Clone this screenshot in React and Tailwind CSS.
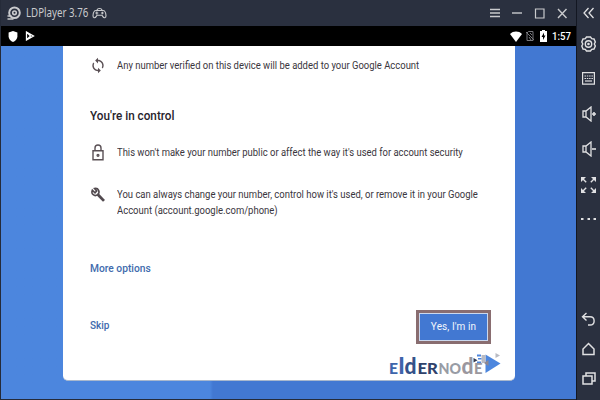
import React from "react";

function Icon({ className = "", w = 16, h = 16, children, sw = 1.3, box }) {
  return (
    <svg className={`block shrink-0 ${className}`} width={w} height={h} viewBox={box || `0 0 ${w} ${h}`} fill="none" stroke="currentColor" strokeWidth={sw}>
      {children}
    </svg>
  );
}

function TitleBar() {
  return (
    <div className="flex h-[26px] items-center bg-[#2a303f] pl-[6px] text-[#c9cacd]">
      <Icon w={14} h={15} sw={2}>
        <circle cx="7.5" cy="6.8" r="5.3" />
        <circle cx="7.5" cy="6.8" r="1.8" strokeWidth="1.6" />
        <path d="M.5 13h6M.5 10h4" strokeWidth="1.5" />
      </Icon>
      <div className="ml-[5px] h-[18px] w-[66px] whitespace-nowrap font-['Noto_Sans'] text-[12px] leading-[18px]">
        <span className="inline-block origin-left scale-x-[0.81]">LDPlayer 3.76</span>
      </div>
      <Icon w={15} h={13} sw={1.1}>
        <path d="M4 3.500h7c2 0 2.800 2.600 3 5 .2 2.500-2 3-3.300.9L10 8.300H5l-.7 1.100C3 11.500.8 11 1 8.500c.2-2.400 1-5 3-5zM5 3.500c0-2 1.200-2 2.500-2s2.500 0 2.500 2M3.300 6h3M4.800 4.500v3M9 6h2.700M10.400 4.700v2.600" />
      </Icon>
      <div className="ml-auto mr-[8px] flex items-center gap-[12px]">
        <Icon w={10} h={10} sw={1.4}><path d="M0 1.500h10M0 5h10M0 8.500h10" /></Icon>
        <Icon w={10} h={10} sw={1.4}><path d="M0 5h10" /></Icon>
        <Icon w={11} h={11} sw={1.2}><path d="M1.500 1h8.500v9H1.500z" /></Icon>
        <Icon w={11} h={11} sw={1.4}><path d="M1 1l8.500 9M9.500 1L1 10" /></Icon>
      </div>
    </div>
  );
}

function StatusBar() {
  return (
    <div className="flex h-5 items-center bg-black pl-[7px] pr-[5px] text-white">
      <Icon w={10} h={11} sw={0}><path fill="currentColor" d="M5 0l4.400 1.500v4C9.400 8 7 10.200 5 11 3 10.200.6 8 .6 5.500v-4z" /></Icon>
      <Icon w={10} h={10} sw={1.3} className="ml-[7px]"><path d="M1.500 1l7 4-7 4zM1.500 1l4 4-4 4" /></Icon>
      <Icon w={12} h={11} sw={0} className="ml-auto"><path fill="currentColor" d="M0 3C3-.3 9-.3 12 3L6 11z" /></Icon>
      <Icon w={8} h={10} sw={1} className="ml-[4px] text-[#77777c]"><path d="M2.500.5H7v9H1V2zM0 1l8 8M3 6l2 3M4 2l2 2" /></Icon>
      <Icon w={7} h={12} sw={0} className="ml-[6px]">
        <path fill="currentColor" d="M2 0h3v1h2v11H0V1h2z" />
        <path fill="#000" d="M4 2.500L1.500 7H3v3l2.500-4.500H4z" />
      </Icon>
      <div className="ml-[5px] h-4 w-[19px] whitespace-nowrap font-[Roboto] text-[11px] font-medium leading-[18px]">
        <span className="inline-block origin-left scale-x-[0.87]">1:57</span>
      </div>
    </div>
  );
}

function Logo() {
  return (
    <svg className="block" width="113" height="24" viewBox="0 0 113 24">
      <g fontFamily="Lato, sans-serif" fontWeight="900">
        <text x="0" y="20.500" fill="#3e65ab" fontSize="15" textLength="9" lengthAdjust="spacingAndGlyphs">E</text>
        <text x="9.500" y="20.500" fill="#3e65ab" fontSize="22" textLength="6" lengthAdjust="spacingAndGlyphs">l</text>
        <text x="15.500" y="20.500" fill="#35528a" fontSize="22" textLength="12" lengthAdjust="spacingAndGlyphs">d</text>
        <text x="28.500" y="20.500" fill="#2f426b" fontSize="15" textLength="20.500" lengthAdjust="spacingAndGlyphs">ER</text>
        <text x="49.500" y="20.500" fill="#989ca5" fontSize="15" textLength="22.500" lengthAdjust="spacingAndGlyphs">NO</text>
        <text x="72.500" y="20.500" fill="#9b979e" fontSize="22" textLength="12" lengthAdjust="spacingAndGlyphs">d</text>
        <text x="85" y="20.500" fill="#9b979e" fontSize="15" textLength="8.500" lengthAdjust="spacingAndGlyphs">E</text>
      </g>
      <path fill="#4c86de" d="M96.500 1.500L111.500 10.500 96.500 20z" />
      <path fill="#b9bbc3" d="M92.500 2h4v8h-4zM106.500 0l4.500 2.500-4.500 2.500z" />
      <path fill="#8e8790" d="M95 10l4.500-3v6z" />
      <path fill="#4c86de" d="M88 1.500h4v2h-4zM89 5h3.500v1.500H89zM88 8.500h4v1.500h-4z" />
      <path fill="#303950" d="M84.500 5l4 2.300-4 2.300z" />
    </svg>
  );
}

function Card() {
  return (
    <div className="flex h-[335px] w-[452px] flex-col rounded-b-[5px] border-b border-[#a9b8cd] bg-white pl-[27px] pt-[11px] font-[Roboto] text-[10px] leading-[16px] text-[#3a363d]">
      <div className="flex h-[17px] items-start">
        <Icon w={16} h={17} sw={0} box="2 0 20 24" className="text-[#5a5055]">
          <path fill="currentColor" d="M12 4V1L8 5l4 4V6c3.310 0 6 2.690 6 6 0 1.010-.25 1.970-.7 2.800l1.460 1.460C19.540 15.030 20 13.570 20 12c0-4.420-3.580-8-8-8zm0 14c-3.310 0-6-2.690-6-6 0-1.010.25-1.970.7-2.800L5.240 7.740C4.460 8.970 4 10.430 4 12c0 4.420 3.580 8 8 8v3l4-4-4-4v3z" />
        </Icon>
        <p className="ml-[11px] mt-px origin-left scale-x-[0.946] whitespace-nowrap">Any number verified on this device will be added to your Google Account</p>
      </div>
      <h1 className="mt-[33px] h-[18px] w-fit origin-left scale-x-[0.977] whitespace-nowrap text-[12px] font-medium leading-[18px] text-[#27232c]">You're in control</h1>
      <div className="mt-[19px] flex h-[17px] items-start">
        <Icon w={15} h={17} sw={1.400} className="text-[#5a5055]">
          <path d="M3 6.700h10v9H3zM5 6.700V4c0-4 6-4 6 0v2.700" />
          <circle cx="8" cy="11.300" r=".9" />
        </Icon>
        <p className="ml-[12px] mt-px origin-left scale-x-[0.945] whitespace-nowrap">This won't make your number public or affect the way it's used for account security</p>
      </div>
      <div className="mt-[25px] flex h-[34px] items-start">
        <Icon w={16} h={17} sw={1.600} className="text-[#51494e]">
          <path d="M2.300 4.200C.8 8 4.500 11 7.600 8.700 10.500 6.200 8.500 1.500 4.500 2.500L6.700 5 5 6.900z" />
          <path d="M7.800 8.500l6.200 6.400" strokeWidth="2.800" />
        </Icon>
        <p className="ml-[11px] mt-px origin-left scale-x-[0.948] whitespace-nowrap">You can always change your number, control how it's used, or remove it in your Google<br />Account (account.google.com/phone)</p>
      </div>
      <button className="mt-[41px] h-[16px] w-fit origin-left scale-x-[1.025] whitespace-nowrap text-left font-medium text-[#416bad]">More options</button>
      <div className="mt-[33px] flex h-[34px] w-[401px] items-center justify-between">
        <button className="mt-[-2px] font-medium text-[#416bad]">Skip</button>
        <button className="flex h-[34px] w-[75px] items-center justify-center whitespace-nowrap border-[3px] border-[#896d70] bg-[#4278d2] pb-px tracking-[0.1px] text-[#f4f7fc] shadow-[inset_0_0_0_1px_#cbd8ee]">Yes, I'm in</button>
      </div>
      <div className="ml-[299px] mt-[9px]"><Logo /></div>
    </div>
  );
}

function Sidebar() {
  return (
    <div className="flex h-full w-[24px] flex-col items-center border-l border-[#131722] bg-[#2a303f] pt-[7px] text-[#e0e0e2]">
      <Icon w={12} h={12} sw={1.300}><path d="M5.500 1L1 6l4.500 5M10.500 1L6 6l4.500 5" /></Icon>
      <Icon w={15} h={16} className="mt-[17px]" sw={1.400}>
        <path d="M5.500 1h4l1.200 1.700 2.300.3 1.300 3-1 2 1 2-1.300 3-2.300.3L9.500 15h-4l-1.200-1.700L2 13 .8 10l1-2-1-2L2 3l2.300-.3z" />
        <circle cx="7.500" cy="8" r="3.200" /><circle cx="7.500" cy="8" r=".6" />
      </Icon>
      <Icon w={13} h={13} className="mt-[20px]" sw={1.200}>
        <path d="M.6.6h11.800v11.500H.6z" />
        <path strokeDasharray="1.500 .8" d="M2.500 4h8.500M2.500 6.500h8.500" /><path d="M3 9h7" />
      </Icon>
      <Icon w={14} h={16} className="mt-[21px]" sw={1.300}><path d="M1 5h3l5-4v14l-5-4H1zM4 5v6" /><path d="M10 8h4M12 6v4" strokeWidth="1.600" /></Icon>
      <Icon w={14} h={16} className="mt-[19px]" sw={1.300}><path d="M1 5h3l5-4v14l-5-4H1zM4 5v6" /><path d="M10 8h4" strokeWidth="1.600" /></Icon>
      <Icon w={15} h={16} className="mt-[20px]" sw={1.400}>
        <path fill="currentColor" strokeWidth="0" d="M0 0h5L0 5zM10 0h5v5zM0 11v5h5zM15 11v5h-5z" />
        <path d="M2 2l3.200 3.200M13 2L9.800 5.200M2 14l3.200-3.200M13 14l-3.200-3.200" />
      </Icon>
      <Icon w={15} h={4} className="mt-[24px]" sw={0}>
        <path fill="currentColor" d="M0 1h2.500v2H0zM6.500 1H9v2H6.500zM12.500 1H15v2h-2.500z" />
      </Icon>
      <Icon w={15} h={15} className="mt-[91px]" sw={1.400}><path d="M5.500 1L1.500 4.800l4 3.800M2 4.800h7c5.500 0 5.500 8.200 0 8.200H7" /></Icon>
      <Icon w={15} h={14} className="mt-[15px]" sw={1.500}><path d="M7.500 1.500L13 7v5.500H2V7z" /></Icon>
      <Icon w={14} h={14} className="mt-[16px]" sw={1.500}><path d="M1 4h9v8H1zM4 3.500V1h9v8h-3" /></Icon>
    </div>
  );
}

export default function App() {
  return (
    <div className="flex h-[400px] w-[600px] overflow-hidden bg-[#252b39]">
      <div className="flex h-full w-[576px] flex-col pl-px">
        <TitleBar />
        <StatusBar />
        <div className="h-[353px] bg-linear-to-r from-[#4c86de] from-[209px] to-[#4278d2] to-[212px] pl-[62px]">
          <Card />
        </div>
      </div>
      <Sidebar />
    </div>
  );
}
